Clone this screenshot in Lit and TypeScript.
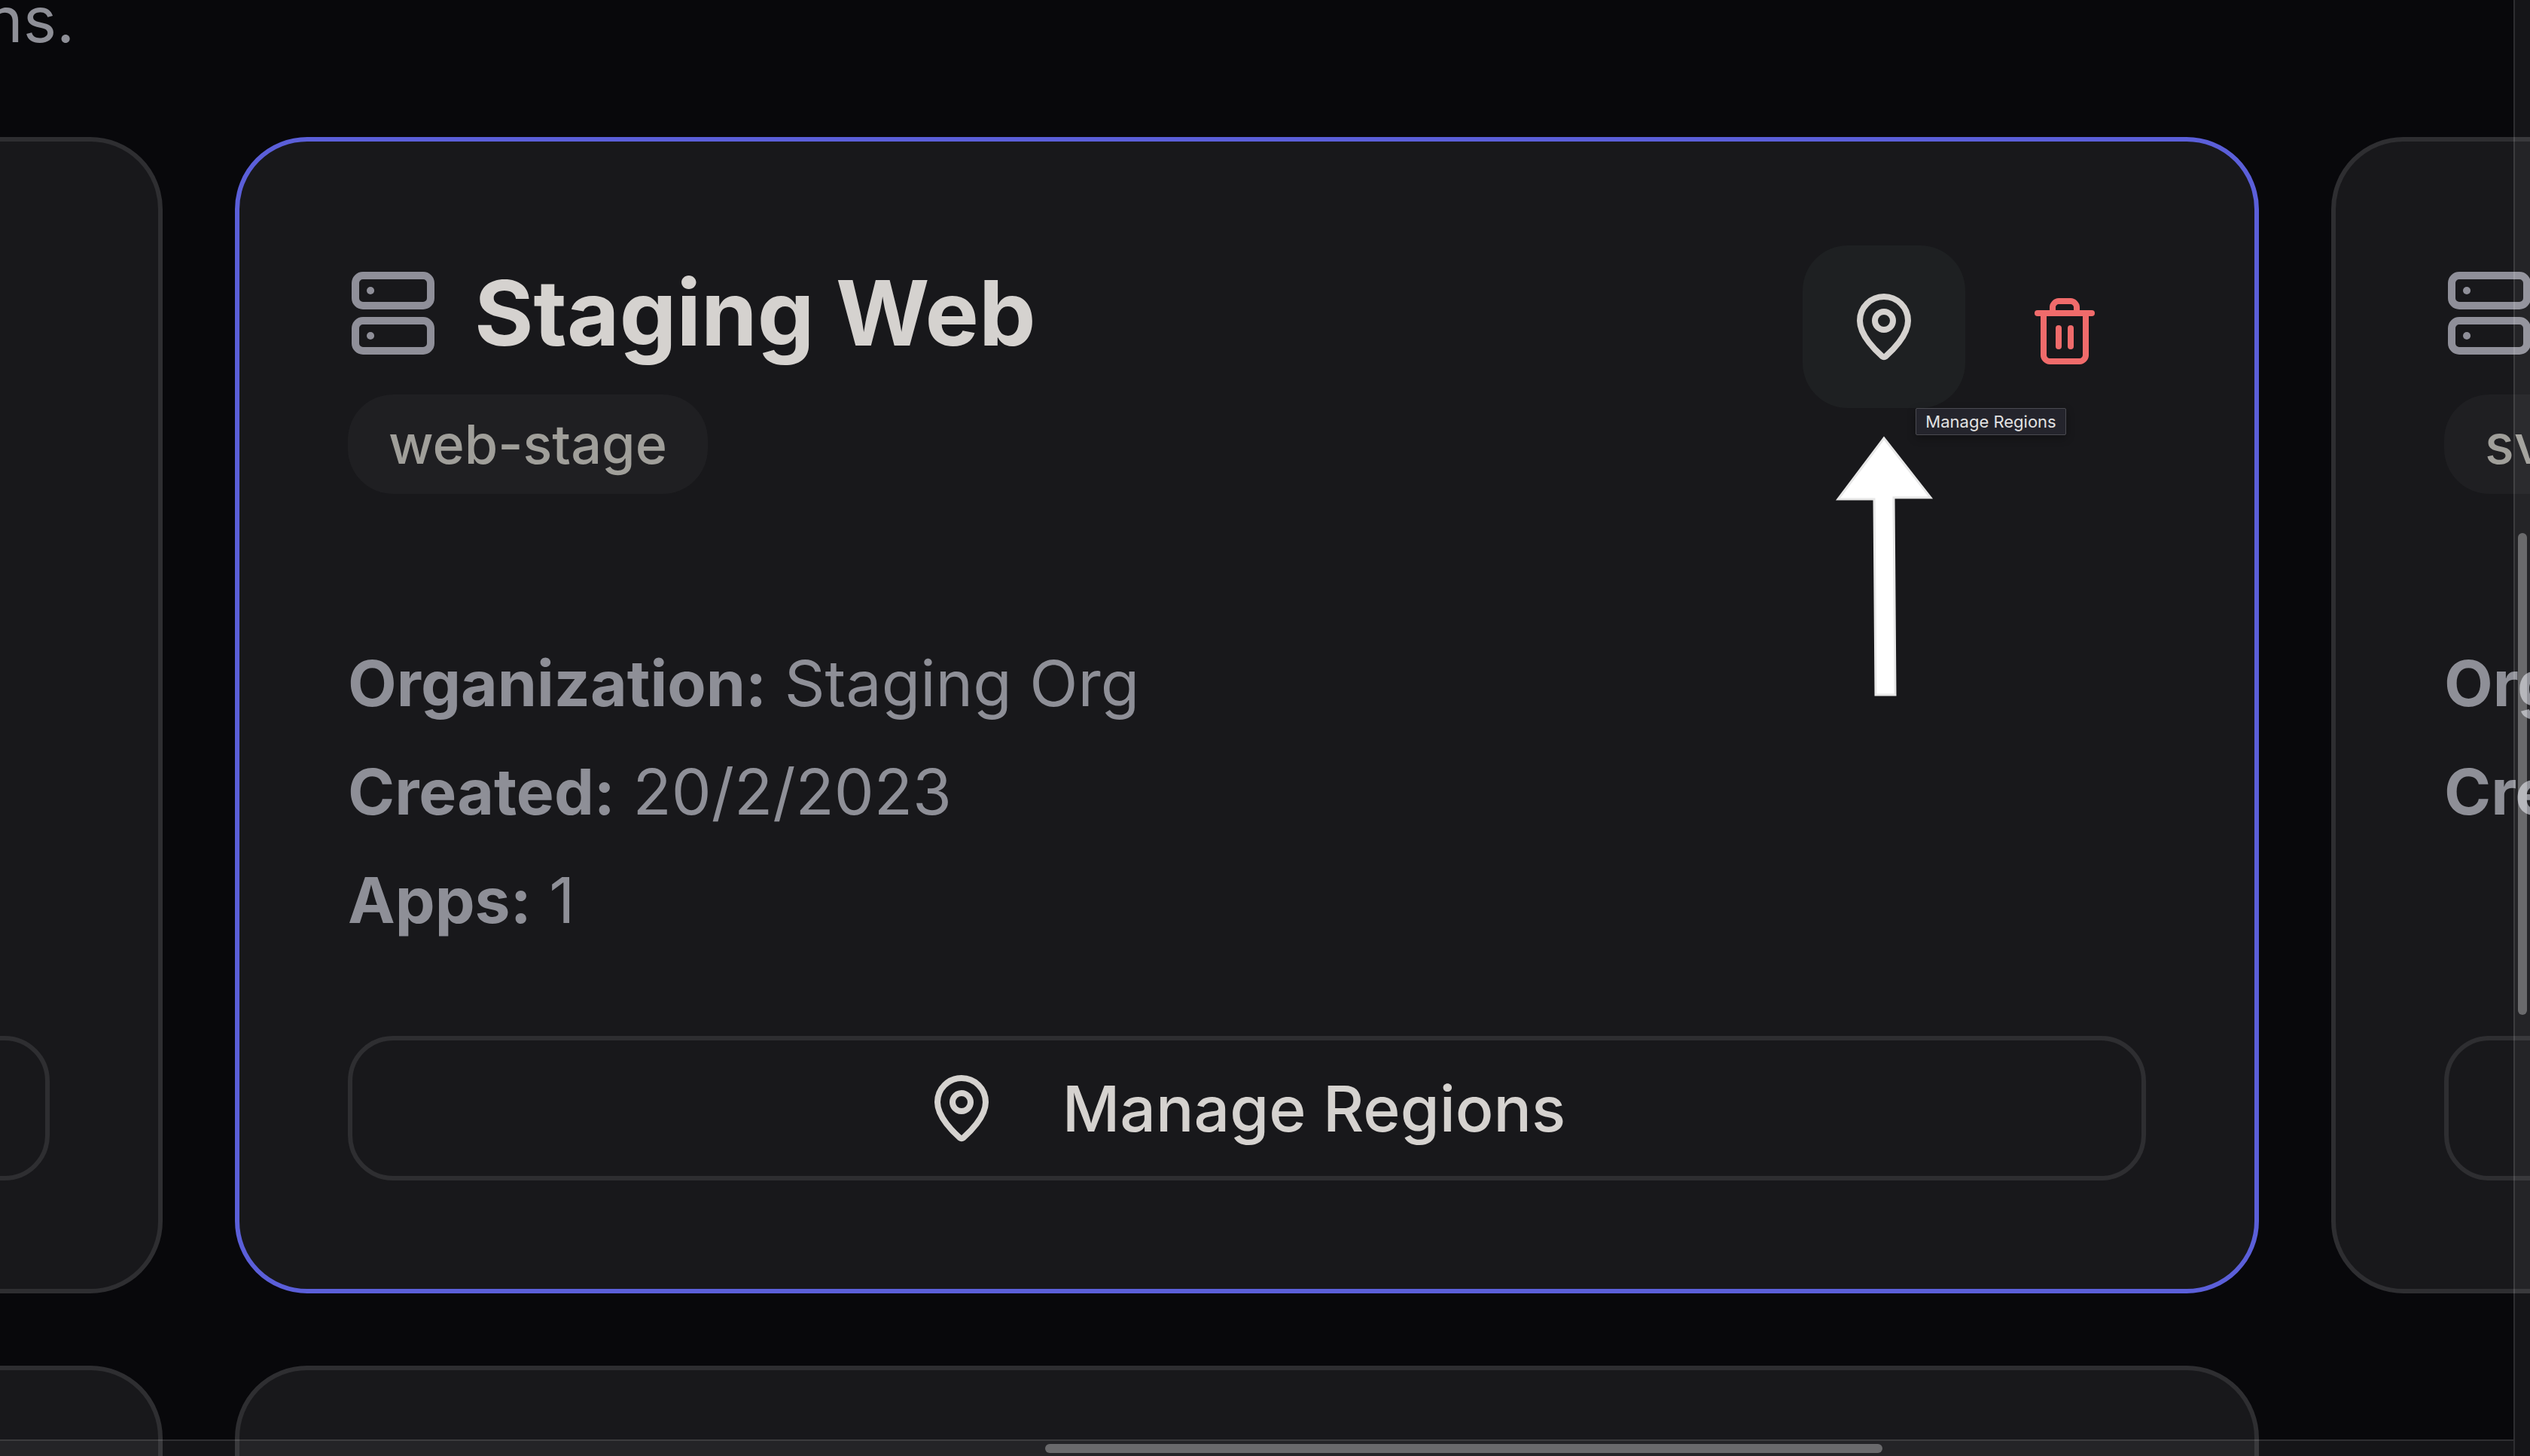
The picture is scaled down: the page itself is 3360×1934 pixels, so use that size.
import { LitElement, css, html, svg } from "lit";
import { customElement } from "lit/decorators.js";

type Environment = {
  name?: string;
  slug?: string;
  organization?: string;
  created?: string;
  apps?: number;
  selected?: boolean;
  hovered?: boolean;
};

// first and last column are scrolled almost out of view, only what shows is filled in
const environments: Environment[] = [
  {},
  { name: "Staging Web", slug: "web-stage", organization: "Staging Org", created: "20/2/2023", apps: 1, selected: true, hovered: true },
  { slug: "sv", organization: "", created: "" },
];

const serverIcon = svg`
  <rect x="2" y="2" width="20" height="8" rx="2" ry="2"></rect>
  <rect x="2" y="14" width="20" height="8" rx="2" ry="2"></rect>
  <line x1="6" y1="6" x2="6.01" y2="6"></line>
  <line x1="6" y1="18" x2="6.01" y2="18"></line>
`;

const pinIcon = svg`
  <path d="M20 10c0 4.993-5.539 10.193-7.399 11.799a1 1 0 0 1-1.202 0C9.539 20.193 4 14.993 4 10a8 8 0 0 1 16 0"></path>
  <circle cx="12" cy="10" r="3"></circle>
`;

const trashIcon = svg`
  <path d="M3 6h18"></path>
  <path d="M19 6v14c0 1-1 2-2 2H7c-1 0-2-1-2-2V6"></path>
  <path d="M8 6V4c0-1 1-2 2-2h4c1 0 2 1 2 2v2"></path>
  <line x1="10" y1="11" x2="10" y2="17"></line>
  <line x1="14" y1="11" x2="14" y2="17"></line>
`;

@customElement("app-root")
export class AppRoot extends LitElement {
  static styles = css`
    :host {
      display: block;
      position: relative;
      width: 3360px;
      height: 1934px;
      overflow: hidden;
      background: #08080b;
      font-family: Inter, "Liberation Sans", sans-serif;
    }
    .intro {
      margin: -34px 0 0 -19px;
      height: 216px;
      font-size: 84px;
      line-height: 120px;
      color: #8e8f97;
    }
    .grid {
      display: grid;
      grid-template-columns: repeat(3, 2688px);
      grid-auto-rows: 1536px;
      gap: 96px;
      margin-left: -2472px;
    }
    .card {
      box-sizing: border-box;
      display: flex;
      flex-direction: column;
      padding: 144px;
      border: 6px solid #2e2e31;
      border-radius: 96px;
      background: #18181b;
    }
    .card.selected {
      border-color: #5b5fd9;
    }
    .head {
      display: flex;
      justify-content: space-between;
      align-items: flex-start;
    }
    .title-row {
      display: flex;
      align-items: center;
      gap: 48px;
      height: 168px;
    }
    .title {
      margin: 0;
      font-size: 120px;
      line-height: 168px;
      font-weight: 700;
      color: #d5d2cf;
    }
    .tag {
      display: inline-block;
      margin-top: 24px;
      padding: 18px 54px;
      border-radius: 60px;
      background: #1f1f22;
      color: #a09f9a;
      font-size: 72px;
      line-height: 96px;
      font-weight: 500;
    }
    .actions {
      display: flex;
      gap: 24px;
    }
    .icon-btn {
      position: relative;
      display: flex;
      align-items: center;
      justify-content: center;
      width: 216px;
      height: 216px;
      border-radius: 60px;
    }
    .icon-btn.hovered {
      background: #1e2022;
      transform: translateY(-6px);
    }
    .icon {
      flex: none;
      fill: none;
      stroke: currentColor;
      stroke-width: 2;
      stroke-linecap: round;
      stroke-linejoin: round;
    }
    .server {
      width: 120px;
      height: 120px;
      color: #8f8f99;
    }
    .small {
      width: 96px;
      height: 96px;
    }
    .pin {
      color: #d5d2cf;
    }
    .trash {
      color: #f06b6b;
    }
    .tooltip {
      position: absolute;
      left: 150px;
      top: 216px;
      box-sizing: border-box;
      width: 200px;
      height: 36px;
      display: flex;
      align-items: center;
      justify-content: center;
      background: #24242c;
      border: 1px solid #4a4a50;
      border-radius: 2px;
      box-shadow: 0 4px 12px rgba(0, 0, 0, 0.3);
      color: #e2e2e2;
      font-size: 22px;
      white-space: nowrap;
      z-index: 2;
    }
    .info {
      margin-top: 192px;
      display: flex;
      flex-direction: column;
      gap: 24px;
      color: #8e8f97;
      font-size: 84px;
      line-height: 120px;
    }
    .info b {
      font-weight: 700;
    }
    .manage {
      box-sizing: border-box;
      margin-top: auto;
      height: 192px;
      padding-right: 4px;
      display: flex;
      align-items: center;
      justify-content: center;
      gap: 86px;
      border: 6px solid #2e2e31;
      border-radius: 60px;
      color: #d5d2cf;
      font-size: 84px;
      font-weight: 500;
    }
    .arrow {
      position: absolute;
      left: 2430px;
      top: 572px;
      width: 144px;
      height: 360px;
    }
    .bar {
      position: absolute;
      background: rgba(255, 255, 255, 0.055);
      box-sizing: border-box;
    }
    .bar.v {
      top: 0;
      right: 0;
      bottom: 0;
      width: 22px;
      border-left: 2px solid rgba(255, 255, 255, 0.11);
    }
    .bar.h {
      left: 0;
      right: 22px;
      bottom: 0;
      height: 22px;
      border-top: 2px solid rgba(255, 255, 255, 0.11);
    }
    .thumb {
      position: absolute;
      background: rgba(255, 255, 255, 0.32);
      border-radius: 6px;
    }
    .bar.v .thumb {
      top: 708px;
      left: 4px;
      width: 12px;
      height: 640px;
    }
    .bar.h .thumb {
      left: 1388px;
      top: 4px;
      width: 1112px;
      height: 12px;
    }
  `;

  private renderCard(env: Environment) {
    return html`
      <article class="card ${env.selected ? "selected" : ""}">
        ${env.slug
          ? html`
              <div class="head">
                <div>
                  <div class="title-row">
                    <svg class="icon server" viewBox="0 0 24 24">${serverIcon}</svg>
                    ${env.name ? html`<h3 class="title">${env.name}</h3>` : ""}
                  </div>
                  <span class="tag">${env.slug}</span>
                </div>
                ${env.selected
                  ? html`
                      <div class="actions">
                        <div class="icon-btn pin ${env.hovered ? "hovered" : ""}">
                          <svg class="icon small" viewBox="0 0 24 24">${pinIcon}</svg>
                          ${env.hovered ? html`<span class="tooltip">Manage Regions</span>` : ""}
                        </div>
                        <div class="icon-btn trash">
                          <svg class="icon small" viewBox="0 0 24 24">${trashIcon}</svg>
                        </div>
                      </div>
                    `
                  : ""}
              </div>
              <div class="info">
                <div><b>Organization:</b> ${env.organization}</div>
                <div><b>Created:</b> ${env.created}</div>
                ${env.apps !== undefined ? html`<div><b>Apps:</b> ${env.apps}</div>` : ""}
              </div>
            `
          : ""}
        <div class="manage">
          <svg class="icon small" viewBox="0 0 24 24">${pinIcon}</svg>
          <span>Manage Regions</span>
        </div>
      </article>
    `;
  }

  render() {
    return html`
      <p class="intro">ns.</p>
      <section class="grid">
        ${environments.map((env) => this.renderCard(env))}
        <article class="card"></article>
        <article class="card"></article>
      </section>
      <svg class="arrow" viewBox="2430 572 144 360">
        <path
          d="M2502 582 L2564 661 L2515 661 L2517 923 L2491 923 L2489 663 L2441 663 Z"
          fill="#fff"
          stroke="#e8e8e8"
          stroke-width="3"
        ></path>
      </svg>
      <div class="bar v"><div class="thumb"></div></div>
      <div class="bar h"><div class="thumb"></div></div>
    `;
  }
}
